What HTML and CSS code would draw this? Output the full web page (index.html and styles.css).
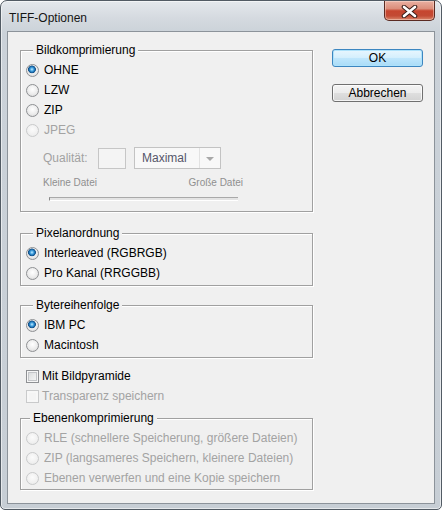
FILE: index.html
```html
<!DOCTYPE html>
<html lang="de">
<head>
<meta charset="utf-8">
<title>TIFF-Optionen</title>
<link rel="stylesheet" href="styles.css">
</head>
<body>
<div class="window">
  <div class="titlebar">
    <span class="title">TIFF-Optionen</span>
    <button class="close" aria-label="Schließen">
      <svg width="17" height="13" viewBox="0 0 17 13">
        <path d="M3 2 L14 11 M14 2 L3 11" stroke="#3a1f1a" stroke-width="4.6" stroke-linecap="round"/>
        <path d="M3 2 L14 11 M14 2 L3 11" stroke="#ffffff" stroke-width="2.6" stroke-linecap="round"/>
      </svg>
    </button>
  </div>
  <div class="client">
    <div class="options">
      <fieldset class="group">
        <legend>Bildkomprimierung</legend>
        <div class="row"><span class="radio checked"></span>OHNE</div>
        <div class="row"><span class="radio"></span>LZW</div>
        <div class="row"><span class="radio"></span>ZIP</div>
        <div class="row disabled"><span class="radio"></span>JPEG</div>
        <div class="quality">
          <span class="q-label">Qualität:</span>
          <span class="q-input"></span>
          <span class="q-select">
            <span class="q-value">Maximal</span>
            <span class="q-arrow"></span>
          </span>
        </div>
        <div class="scale"><span>Kleine Datei</span><span>Große Datei</span></div>
        <div class="slider"></div>
      </fieldset>

      <fieldset class="group group-pixel">
        <legend>Pixelanordnung</legend>
        <div class="row"><span class="radio checked"></span>Interleaved (RGBRGB)</div>
        <div class="row"><span class="radio"></span>Pro Kanal (RRGGBB)</div>
      </fieldset>

      <fieldset class="group group-byte">
        <legend>Bytereihenfolge</legend>
        <div class="row"><span class="radio checked"></span>IBM PC</div>
        <div class="row"><span class="radio"></span>Macintosh</div>
      </fieldset>

      <div class="checks">
        <div class="row"><span class="check"></span>Mit Bildpyramide</div>
        <div class="row disabled"><span class="check"></span>Transparenz speichern</div>
      </div>

      <fieldset class="group group-layers">
        <legend>Ebenenkomprimierung</legend>
        <div class="row disabled"><span class="radio"></span>RLE (schnellere Speicherung, größere Dateien)</div>
        <div class="row disabled"><span class="radio"></span>ZIP (langsameres Speichern, kleinere Dateien)</div>
        <div class="row disabled"><span class="radio"></span>Ebenen verwerfen und eine Kopie speichern</div>
      </fieldset>
    </div>

    <div class="buttons">
      <button class="btn btn-default">OK</button>
      <button class="btn">Abbrechen</button>
    </div>
  </div>
</div>
</body>
</html>
```

FILE: styles.css
```css
* { box-sizing: border-box; }

html, body {
  margin: 0;
  padding: 0;
}

body {
  width: 442px;
  height: 510px;
  background: #ffffff;
  font-family: "Liberation Sans", Arial, sans-serif;
  font-size: 12px;
  color: #000;
}

.window {
  width: 442px;
  height: 510px;
  border: 1px solid #525b64;
  border-radius: 7px 7px 5px 5px;
  background: linear-gradient(180deg, #e4e8ec 0, #d4d9df 18px, #cbd2d9 32px, #c7ced5 100%);
  box-shadow: inset 0 0 0 1px rgba(255, 255, 255, 0.55);
  display: flex;
  flex-direction: column;
  overflow: hidden;
}

.titlebar {
  height: 30px;
  flex: none;
  display: flex;
  justify-content: space-between;
  align-items: flex-start;
  padding: 0 6px 0 8px;
}

.title {
  margin-top: 10px;
  line-height: 15px;
  color: #151515;
}

.close {
  width: 51px;
  height: 20px;
  padding: 0;
  border: 1px solid #5a2a22;
  border-top: none;
  border-radius: 0 0 5px 5px;
  background: linear-gradient(180deg, #e9b0a2 0, #dc8e7b 40%, #c6452f 52%, #c34a34 78%, #d9866b 100%);
  box-shadow: inset 0 0 0 1px rgba(255, 230, 220, 0.45);
  display: flex;
  align-items: center;
  justify-content: center;
}

.close svg { display: block; margin-top: 1px; }

.client {
  flex: 1;
  margin: 0 6px 5px;
  border: 1px solid #8c939a;
  background: #f0f0f0;
  display: flex;
  align-items: flex-start;
  gap: 19px;
  padding: 11px 0 0 12px;
}

.options {
  width: 293px;
  display: flex;
  flex-direction: column;
}

.group {
  margin: 0;
  padding: 2px 5px 10px 5px;
  border: 1px solid #a0a0a0;
  box-shadow: inset 1px 1px 0 #ffffff, 1px 1px 0 #ffffff;
  min-width: 0;
}

.group legend {
  margin-left: 7px;
  padding: 0 3px;
  line-height: 15px;
  background: #f0f0f0;
}

.group-pixel { margin-top: 14px; padding-bottom: 2px; }
.group-byte { margin-top: 12px; padding-bottom: 2px; }
.group-layers { margin-top: 5px; padding-bottom: 1px; }
.group-layers legend { margin-left: 4px; }

.row {
  display: flex;
  align-items: center;
  height: 20px;
  white-space: nowrap;
}

.row.disabled { color: #a3a3a3; }

.radio {
  flex: none;
  width: 13px;
  height: 13px;
  margin-right: 5px;
  border-radius: 50%;
  border: 1px solid #8e9093;
  background: radial-gradient(circle at 50% 40%, #ffffff 0, #ececec 55%, #d2d2d2 100%);
}

.radio.checked {
  background:
    radial-gradient(circle at 45% 40%, #c8ecff 0, #4aa8e4 1.6px, #1b6fb0 2.8px, #144f86 3.6px, rgba(20, 79, 134, 0) 4.2px),
    radial-gradient(circle at 50% 40%, #ffffff 0, #ececec 55%, #d2d2d2 100%);
}

.row.disabled .radio {
  border-color: #c9cacb;
  background: radial-gradient(circle at 50% 40%, #fbfbfb 0, #f0f0f0 60%, #e6e6e6 100%);
}

.check {
  flex: none;
  width: 13px;
  height: 13px;
  margin-right: 3px;
  border: 1px solid #8e9093;
  background: linear-gradient(135deg, #d4d6d8 0, #eceded 60%, #f8f8f8 100%);
  box-shadow: inset 0 0 0 1px #f6f6f6, inset 0 0 0 2px #c3c5c8;
}

.row.disabled .check {
  border-color: #c9cacb;
  background: #f4f4f4;
  box-shadow: inset 0 0 0 2px #f7f7f7;
}

.quality {
  display: flex;
  align-items: center;
  height: 22px;
  margin: 7px 0 0 17px;
}

.q-label {
  width: 55px;
  color: #a2a2a2;
}

.q-input {
  width: 28px;
  height: 21px;
  margin-right: 8px;
  border: 1px solid #c6c6c6;
  background: #f4f4f4;
}

.q-select {
  width: 87px;
  height: 22px;
  display: flex;
  border: 1px solid #c3c3c3;
  background: #f8f8f8;
}

.q-value {
  width: 65px;
  padding-left: 7px;
  line-height: 20px;
  color: #56566a;
  border-right: 1px solid #e2e2e2;
}

.q-arrow {
  flex: 1;
  display: flex;
  align-items: center;
  justify-content: center;
}

.q-arrow::after {
  content: "";
  width: 0;
  height: 0;
  margin-top: 1px;
  border-left: 4px solid transparent;
  border-right: 4px solid transparent;
  border-top: 4px solid #a8a8a8;
}

.scale {
  width: 200px;
  margin: 7px 0 0 17px;
  display: flex;
  justify-content: space-between;
  font-size: 10px;
  line-height: 14px;
  color: #8f8f8f;
}

.slider {
  width: 189px;
  height: 4px;
  margin: 7px 0 0 23px;
  border-top: 1px solid #a9a9a9;
  border-left: 1px solid #8a8a8a;
  border-bottom: 1px solid #ffffff;
  background: #e4e4e4;
}

.checks {
  margin-top: 8px;
  padding-left: 6px;
}

.buttons {
  margin-top: 6px;
  display: flex;
  flex-direction: column;
  gap: 17px;
}

.btn {
  width: 91px;
  height: 18px;
  padding: 0;
  font-family: "Liberation Sans", Arial, sans-serif;
  font-size: 12px;
  line-height: 16px;
  color: #000;
  border: 1px solid #707070;
  border-radius: 3px;
  background: linear-gradient(180deg, #f4f4f4 0, #ececec 48%, #dedede 52%, #d3d3d3 100%);
  box-shadow: inset 0 0 0 1px rgba(255, 255, 255, 0.75);
}

.btn-default {
  border-color: #3c86c0;
  background: linear-gradient(180deg, #e8f6fe 0, #d4effd 48%, #bfe6fc 52%, #a9dcf7 100%);
  box-shadow: inset 0 0 0 1px #aee2fb;
}
```
